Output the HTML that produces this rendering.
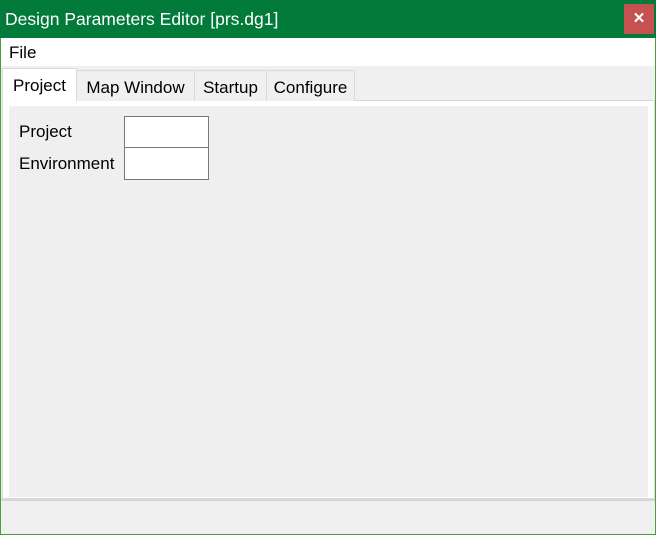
<!DOCTYPE html>
<html><head><style>
*{margin:0;padding:0;box-sizing:border-box}
body{width:656px;height:535px;overflow:hidden;font-family:"Liberation Sans",sans-serif;background:#f0f0f0;position:relative}
.win{position:absolute;left:0;top:0;width:656px;height:535px;border:1px solid #4c9e3c;border-top:none;background:#f0f0f0}
.title{position:absolute;left:-1px;top:0;width:656px;height:38px;background:#017a3a;color:#fff;font-size:17.5px;line-height:38px;padding-left:5px}
.close{position:absolute;left:623px;top:4px;width:30px;height:30px;background:#c75050;color:#fff;font-size:15px;font-weight:bold;text-align:center;line-height:29px}
.menu{position:absolute;left:0;top:38px;width:654px;height:28px;background:#fff;font-size:17px;line-height:30px;padding-left:8px;color:#000}
.tab{position:absolute;font-size:17px;color:#000;border:1px solid #d9d9d9;border-bottom:none;background:#f0f0f0;top:70px;height:31px;line-height:33px;text-align:center}
.tab.sel{background:#fff;top:68px;height:33px;line-height:34px;z-index:2}
.panel{position:absolute;left:1px;top:100px;width:653px;height:399px;border:1px solid #d9d9d9;background:#fff}
.inner{position:absolute;left:6px;top:5px;width:639px;height:391px;background:#efefef}
.lbl{position:absolute;font-size:17px;color:#000}
.tb{position:absolute;left:123px;width:85px;height:33px;border:1px solid #7a7a7a;background:#fff}
.sep{position:absolute;left:0;top:499px;width:654px;height:2px;background:#d6d6d6}
</style></head><body>
<div class="win">
<div class="title">Design Parameters Editor [prs.dg1]</div>
<div class="close">✕</div>
<div class="menu">File</div>
<div class="panel"><div class="inner"></div></div>
<div class="tab sel" style="left:1px;width:75px">Project</div>
<div class="tab" style="left:75px;width:119px">Map Window</div>
<div class="tab" style="left:193px;width:73px">Startup</div>
<div class="tab" style="left:265px;width:89px">Configure</div>
<div class="lbl" style="left:18px;top:122px">Project</div>
<div class="lbl" style="left:18px;top:154px">Environment</div>
<div class="tb" style="top:116px"></div>
<div class="tb" style="top:147px"></div>
<div class="sep"></div>
</div>
</body></html>
